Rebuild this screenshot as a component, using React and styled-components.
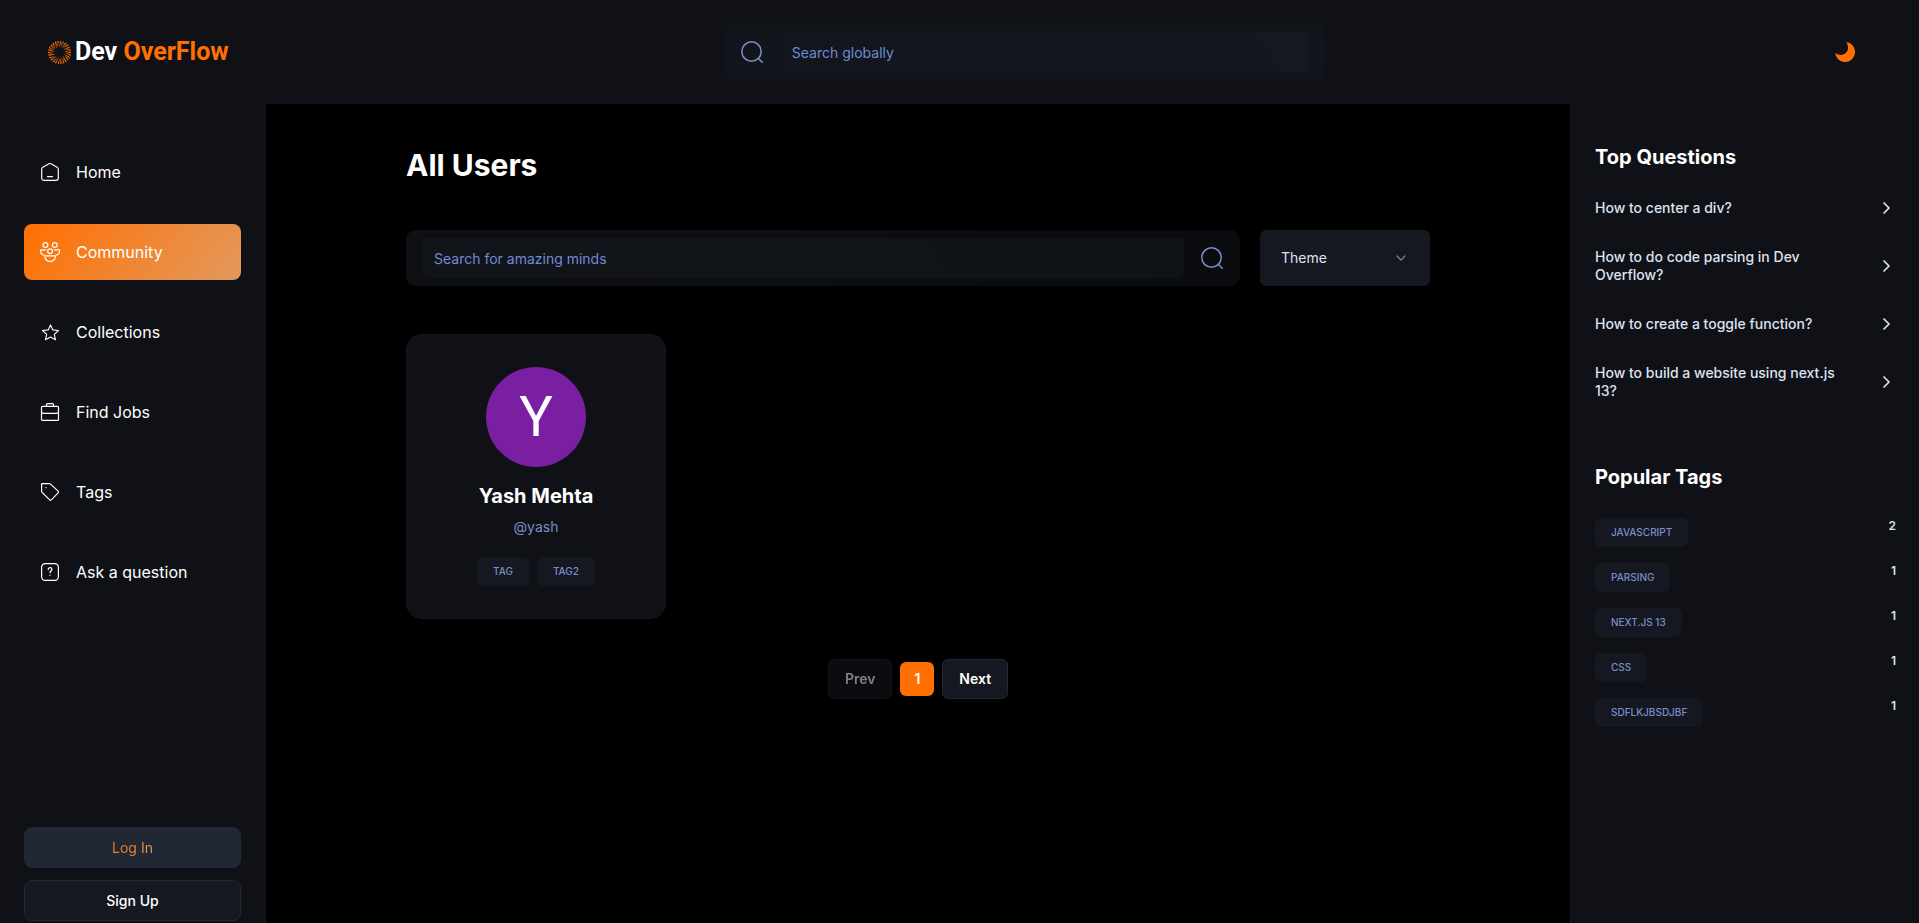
import React from "react";
import styled, { createGlobalStyle, css } from "styled-components";

const color = {
  black: "#000000",
  panel: "#0f1117",
  raised: "#151821",
  line: "#212734",
  accent: "#ff7000",
  muted: "#7b8ec8",
  placeholder: "#6f8bd8",
  soft: "#dce3f1",
  white: "#ffffff",
};

const glass =
  "linear-gradient(232deg, rgba(23, 28, 35, 0.41) 0%, rgba(19, 22, 28, 0.7) 100%)";
const warm = "linear-gradient(129deg, #ff7000 0%, #e2995f 100%)";

const GlobalStyle = createGlobalStyle`
  *, *::before, *::after { box-sizing: border-box; }
  body {
    margin: 0;
    background: ${color.black};
    color: ${color.white};
    font-family: Inter, "Liberation Sans", sans-serif;
    font-size: 14px;
    line-height: 20px;
  }
  h1, h2, p, ul { margin: 0; padding: 0; }
  ul { list-style: none; }
  a { color: inherit; text-decoration: none; }
  button, input, select { font: inherit; color: inherit; }
  svg { display: block; flex: none; }
`;

const Page = styled.div`
  display: flex;
  flex-direction: column;
  min-height: 100vh;
`;

const Header = styled.header`
  display: flex;
  align-items: center;
  justify-content: space-between;
  gap: 20px;
  padding: 24px 48px;
  background: ${color.panel};
`;

const Logo = styled.a`
  display: flex;
  align-items: center;
  gap: 4px;
  min-width: 180px;
  font-family: Roboto, "Liberation Sans", sans-serif;
  font-size: 25px;
  font-weight: 700;
  line-height: 32px;
  white-space: nowrap;

  span span { color: ${color.accent}; }
`;

const ThemeToggle = styled.button`
  padding: 8px 16px;
  border: 0;
  background: none;
  cursor: pointer;
`;

const SearchBar = styled.label`
  display: flex;
  align-items: center;
  gap: 16px;
  flex: 1;
  min-width: 0;
  max-width: ${(p) => p.$max || "none"};
  min-height: 56px;
  padding: 0 16px;
  border-radius: ${(p) => (p.$max ? "12px" : "10px")};
  background: ${glass};
`;

const SearchInput = styled.input`
  flex: 1;
  min-width: 0;
  height: 40px;
  padding: 0 12px;
  border: 0;
  border-radius: 6px;
  outline: none;
  background: ${glass};

  &::placeholder { color: ${color.placeholder}; opacity: 1; }
`;

const Body = styled.div`
  display: flex;
  flex: 1;
`;

const LeftBar = styled.aside`
  display: flex;
  flex: none;
  flex-direction: column;
  justify-content: space-between;
  gap: 24px;
  width: 266px;
  padding: 40px 24px 2px;
  border-right: 1px solid ${color.raised};
  background: ${color.panel};
`;

const Nav = styled.nav`
  display: flex;
  flex-direction: column;
  gap: 24px;
`;

const NavLink = styled.a`
  display: flex;
  align-items: center;
  gap: 16px;
  padding: 16px;
  border-radius: 8px;
  font-size: 16px;
  line-height: 24px;
  background: ${(p) => (p.$active ? warm : "none")};
`;

const AuthButtons = styled.div`
  display: flex;
  flex-direction: column;
  gap: 12px;
`;

const AuthButton = styled.button`
  min-height: 41px;
  border: 1px solid ${color.line};
  border-radius: 8px;
  background: ${(p) => (p.$filled ? color.line : color.raised)};
  font-weight: 500;
  cursor: pointer;
`;

const WarmText = styled.span`
  background: ${warm};
  background-clip: text;
  color: transparent;
  font-weight: 400;
`;

const Main = styled.main`
  flex: 1;
  min-width: 0;
  padding: 40px 24px;
`;

const Content = styled.div`
  max-width: 1024px;
  margin: 0 auto;
`;

const Title = styled.h1`
  font-size: 30px;
  font-weight: 700;
  line-height: 42px;
`;

const Filters = styled.div`
  display: flex;
  gap: 20px;
  margin-top: 44px;
`;

const SelectBox = styled.div`
  position: relative;
  width: 170px;

  select {
    width: 100%;
    height: 56px;
    padding: 0 20px;
    border: 1px solid ${color.raised};
    border-radius: 6px;
    outline: none;
    appearance: none;
    background: ${color.raised};
    color: ${color.soft};
  }

  svg {
    position: absolute;
    top: 20px;
    right: 21px;
    pointer-events: none;
    opacity: 0.5;
  }
`;

const Users = styled.section`
  display: flex;
  flex-wrap: wrap;
  gap: 16px;
  margin-top: 48px;
`;

const UserCard = styled.article`
  display: flex;
  flex-direction: column;
  align-items: center;
  width: 260px;
  padding: 32px;
  border: 1px solid ${color.raised};
  border-radius: 16px;
  background: ${color.panel};
`;

const Avatar = styled.div`
  display: grid;
  place-items: center;
  width: 100px;
  height: 100px;
  border-radius: 50%;
  background: #7b1fa2;
  font-family: Roboto, sans-serif;
  font-size: 56px;
  line-height: 56px;
`;

const Heading = styled.h2`
  font-size: 20px;
  font-weight: 700;
  line-height: 26px;
`;

const UserName = styled(Heading)`
  margin-top: 16px;
`;

const Handle = styled.p`
  margin-top: 8px;
  color: ${color.muted};
`;

const TagRow = styled.div`
  display: flex;
  gap: 8px;
  margin-top: 20px;
`;

const Tag = styled.a`
  padding: 8px 16px;
  border-radius: 6px;
  background: ${color.raised};
  color: ${color.muted};
  font-size: 10px;
  font-weight: 500;
  line-height: 13px;
  text-transform: uppercase;
`;

const Pagination = styled.nav`
  display: flex;
  align-items: center;
  justify-content: center;
  gap: 8px;
  margin-top: 40px;
`;

const pageBox = css`
  border-radius: 6px;
  font-size: 14px;
`;

const PageButton = styled.button`
  ${pageBox}
  min-height: 40px;
  padding: 0 16px;
  border: 1px solid ${color.line};
  background: ${color.raised};
  font-weight: 600;

  &:disabled { opacity: 0.5; }
`;

const CurrentPage = styled.span`
  ${pageBox}
  padding: 7px 14px;
  background: ${color.accent};
  font-weight: 600;
`;

const RightBar = styled.aside`
  flex: none;
  width: 349px;
  padding: 40px 23px 40px 24px;
  border-left: 1px solid ${color.raised};
  background: ${color.panel};
`;

const Block = styled.section`
  & + & { margin-top: 64px; }
`;

const List = styled.ul`
  display: flex;
  flex-direction: column;
  gap: ${(p) => p.$gap};
  margin-top: 28px;
`;

const QuestionLink = styled.a`
  display: flex;
  align-items: center;
  justify-content: space-between;
  gap: 28px;
  color: ${color.soft};
  font-weight: 500;
  line-height: 18px;
`;

const TagItem = styled.li`
  display: flex;
  align-items: flex-start;
  justify-content: space-between;
`;

const Count = styled.span`
  color: ${color.soft};
  font-size: 12px;
  font-weight: 600;
  line-height: 16px;
`;

const rays = Array.from({ length: 26 }, (_, i) => {
  const a = (i / 26) * Math.PI * 2;
  const inner = i % 2 ? 6.4 : 5;
  const at = (r, t) =>
    `${(11.5 + r * Math.cos(t)).toFixed(2)} ${(11.5 + r * Math.sin(t)).toFixed(2)}`;
  return `M${at(inner, a - 0.18)}L${at(11.4, a - 0.05)}L${at(11.4, a + 0.06)}Z`;
}).join("");

const LogoMark = () => (
  <svg width="23" height="23" viewBox="0 0 23 23" aria-hidden="true">
    <path d={rays} fill={color.accent} stroke={color.accent} strokeWidth="0.2" />
  </svg>
);

const Moon = () => (
  <svg width="20" height="20" viewBox="0 0 20 20" aria-hidden="true">
    <path
      fill={color.accent}
      d="M11.2.1A10 10 0 1 1 .1 10.8C1.6 12.1 3.7 12.9 6 12.9c3.9 0 7-3.1 7-6.9 0-2.2-.6-4.4-1.8-5.9Z"
    />
  </svg>
);

const SearchIcon = () => (
  <svg width="24" height="24" viewBox="0 0 24 24" fill="none" stroke={color.muted} strokeWidth="1.5" strokeLinecap="round" aria-hidden="true">
    <circle cx="11.5" cy="11.5" r="9.7" />
    <path d="m18.7 18.7 3.6 3.6" />
  </svg>
);

const ChevronDown = () => (
  <svg width="16" height="16" viewBox="0 0 24 24" fill="none" stroke={color.soft} strokeWidth="2" strokeLinecap="round" strokeLinejoin="round" aria-hidden="true">
    <path d="m6 9 6 6 6-6" />
  </svg>
);

const ChevronRight = () => (
  <svg width="20" height="20" viewBox="0 0 20 20" fill="none" stroke={color.soft} strokeWidth="1.7" strokeLinecap="round" strokeLinejoin="round" aria-hidden="true">
    <path d="m8 5 5 5-5 5" />
  </svg>
);

const NavIcon = ({ children }) => (
  <svg width="20" height="20" viewBox="0 0 20 20" fill="none" stroke={color.white} strokeWidth="1.2" strokeLinecap="round" strokeLinejoin="round" aria-hidden="true">
    {children}
  </svg>
);

const navItems = [
  {
    label: "Home",
    icon: (
      <>
        <path d="M8.9 1.8 2.9 5.2a2.3 2.3 0 0 0-1.2 2V16a2.4 2.4 0 0 0 2.4 2.4h11.8a2.4 2.4 0 0 0 2.4-2.4V7.2a2.3 2.3 0 0 0-1.2-2L11.1 1.8a2.2 2.2 0 0 0-2.2 0Z" />
        <path d="M7.6 14.7h4.8" />
      </>
    ),
  },
  {
    label: "Community",
    active: true,
    icon: (
      <>
        <circle cx="5.4" cy="3.1" r="2.4" />
        <circle cx="14.8" cy="3.1" r="2.4" />
        <circle cx="10.1" cy="9.2" r="2.4" />
        <path d="M5.6 7.8H1.2a.6.6 0 0 0-.6.6c0 2.5 1.4 4.4 3.7 4.8M14.6 7.8H19a.6.6 0 0 1 .6.6c0 2.5-1.4 4.4-3.7 4.8" />
        <path d="M5.4 13.9h9.4a.6.6 0 0 1 .6.6 5.3 5 0 0 1-10.6 0 .6.6 0 0 1 .6-.6Z" />
      </>
    ),
  },
  {
    label: "Collections",
    icon: (
      <path strokeWidth="1.1" d="m10.5 2.9 2.3 5 5.7.6-4.2 3.8 1.2 5.4-5-2.6-5 2.6 1.2-5.4-4.2-3.8 5.7-.6Z" />
    ),
  },
  {
    label: "Find Jobs",
    icon: (
      <>
        <rect x="1.5" y="4.4" width="17" height="14" rx="1" />
        <path d="M6.5 4.2V2.6c0-.6.4-1 1-1h5c.6 0 1 .4 1 1v1.6M1.5 9.6c0 1 .8 1.7 1.8 1.7h13.4c1 0 1.8-.7 1.8-1.7" />
      </>
    ),
  },
  {
    label: "Tags",
    icon: (
      <>
        <path d="M1.6 2.1c0-.3.2-.5.5-.5h7.3c.4 0 .8.2 1.1.5l7.4 6.8c.7.7.7 1.6 0 2.3l-6.3 6.5c-.6.6-1.6.6-2.2 0L2.1 10.4c-.3-.3-.5-.7-.5-1.1Z" />
        <path d="M6 5.6v.1" />
      </>
    ),
  },
  {
    label: "Ask a question",
    icon: (
      <>
        <rect x="1.6" y="1.6" width="16.8" height="16.8" rx="3.6" />
        <path d="M8.2 7.6c0-2.6 3.7-2.4 3.7-.1 0 1.5-1.9 1.5-1.9 3.2M10 13.2v.1" />
      </>
    ),
  },
];

const questions = [
  "How to center a div?",
  "How to do code parsing in Dev Overflow?",
  "How to create a toggle function?",
  "How to build a website using next.js 13?",
];

const popularTags = [
  ["Javascript", 2],
  ["Parsing", 1],
  ["Next.js 13", 1],
  ["CSS", 1],
  ["sdflkjbsdjbf", 1],
];

export default function App() {
  return (
    <Page>
      <GlobalStyle />
      <Header>
        <Logo href="#home">
          <LogoMark />
          <span>
            Dev <span>OverFlow</span>
          </span>
        </Logo>
        <SearchBar $max="600px">
          <SearchIcon />
          <SearchInput type="text" placeholder="Search globally" aria-label="Search globally" />
        </SearchBar>
        <ThemeToggle type="button" aria-label="Toggle color theme">
          <Moon />
        </ThemeToggle>
      </Header>

      <Body>
        <LeftBar>
          <Nav aria-label="Main">
            {navItems.map((item) => (
              <NavLink
                key={item.label}
                href="#"
                $active={item.active}
                aria-current={item.active ? "page" : undefined}
              >
                <NavIcon>{item.icon}</NavIcon>
                {item.label}
              </NavLink>
            ))}
          </Nav>
          <AuthButtons>
            <AuthButton type="button" $filled>
              <WarmText>Log In</WarmText>
            </AuthButton>
            <AuthButton type="button">Sign Up</AuthButton>
          </AuthButtons>
        </LeftBar>

        <Main>
          <Content>
            <Title>All Users</Title>
            <Filters>
              <SearchBar>
                <SearchInput
                  type="text"
                  placeholder="Search for amazing minds"
                  aria-label="Search for amazing minds"
                />
                <SearchIcon />
              </SearchBar>
              <SelectBox>
                <select aria-label="Filter users" defaultValue="Theme">
                  <option>Theme</option>
                </select>
                <ChevronDown />
              </SelectBox>
            </Filters>
            <Users>
              <UserCard>
                <Avatar>Y</Avatar>
                <UserName>Yash Mehta</UserName>
                <Handle>@yash</Handle>
                <TagRow>
                  <Tag href="#tag">Tag</Tag>
                  <Tag href="#tag2">Tag2</Tag>
                </TagRow>
              </UserCard>
            </Users>
            <Pagination aria-label="Pagination">
              <PageButton type="button" disabled>
                Prev
              </PageButton>
              <CurrentPage aria-current="page">1</CurrentPage>
              <PageButton type="button">Next</PageButton>
            </Pagination>
          </Content>
        </Main>

        <RightBar>
          <Block>
            <Heading>Top Questions</Heading>
            <List $gap="30px">
              {questions.map((q) => (
                <li key={q}>
                  <QuestionLink href="#">
                    <span>{q}</span>
                    <ChevronRight />
                  </QuestionLink>
                </li>
              ))}
            </List>
          </Block>
          <Block>
            <Heading>Popular Tags</Heading>
            <List $gap="16px">
              {popularTags.map(([name, count]) => (
                <TagItem key={name}>
                  <Tag href="#">{name}</Tag>
                  <Count>{count}</Count>
                </TagItem>
              ))}
            </List>
          </Block>
        </RightBar>
      </Body>
    </Page>
  );
}
